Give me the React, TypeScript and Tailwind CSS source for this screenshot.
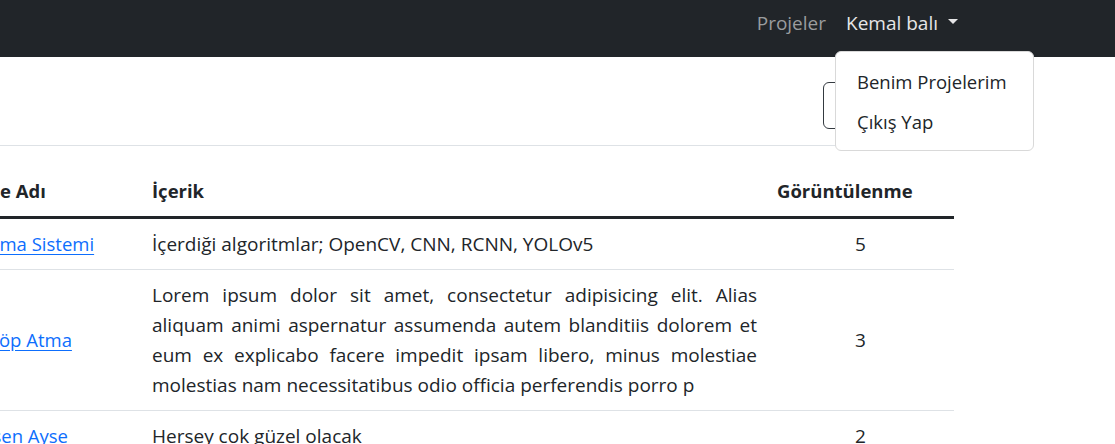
import React from "react";

const lines = [
  "Lorem ipsum dolor sit amet, consectetur adipisicing elit. Alias",
  "aliquam animi aspernatur assumenda autem blanditiis dolorem et",
  "eum ex explicabo facere impedit ipsam libero, minus molestiae",
];
const lastLine = "molestias nam necessitatibus odio officia perferendis porro p";

export default function App() {
  return (
    <div className="relative w-[1115px] h-[444px] overflow-hidden bg-white text-[#212529] font-['Open_Sans',sans-serif] text-[18.5px] leading-[30px]">
      {/* Navbar */}
      <nav className="h-[57px] bg-[#212529] flex justify-end pr-[147px] pt-[8px] text-[19px]">
        <a className="px-[10px] text-[#9a9c9e] h-[30px]">Projeler</a>
        <a className="px-[10px] text-[#e6e6e7] h-[30px] flex items-center">
          Kemal balı
          <span className="ml-[10px] mt-[-3px] inline-block w-0 h-0 border-l-[5px] border-r-[5px] border-t-[5px] border-l-transparent border-r-transparent border-t-[#e6e6e7]" />
        </a>
      </nav>

      {/* Content */}
      <div className="ml-[-47px] w-[1001px]">
        <div className="flex justify-end pt-[25px] pb-[16px] border-b border-[#dee2e6]">
          <button className="h-[47px] w-[131px] border border-[#343a40] rounded-[6px] px-[15px] text-[#212529]">
            Proje Ekle
          </button>
        </div>

        <table className="mt-[20px] w-[1001px] table-fixed border-collapse">
          <colgroup>
            <col className="w-[189px]" />
            <col className="w-[625px]" />
            <col className="w-[187px]" />
          </colgroup>
          <thead>
            <tr className="border-b-[3px] border-[#212529]">
              <th className="text-left font-bold px-[10px] py-[10px] whitespace-nowrap">Proje Adı</th>
              <th className="text-left font-bold px-[10px] py-[10px]">İçerik</th>
              <th className="text-left font-bold px-[10px] py-[10px]">Görüntülenme</th>
            </tr>
          </thead>
          <tbody className="text-[19px]">
            <tr className="border-b border-[#dee2e6]">
              <td className="px-[10px] py-[10px] align-middle whitespace-nowrap text-[18.5px]">
                <a className="text-[#0d6efd] underline underline-offset-[3px]">Tanıma Sistemi</a>
              </td>
              <td className="px-[10px] py-[10px] align-middle">İçerdiği algoritmlar; OpenCV, CNN, RCNN, YOLOv5</td>
              <td className="px-[10px] py-[10px] align-middle text-center">5</td>
            </tr>
            <tr className="border-b border-[#dee2e6]">
              <td className="px-[10px] py-[10px] align-middle whitespace-nowrap text-[18.5px]">
                <a className="text-[#0d6efd] underline underline-offset-[3px]">Ev Çöp Atma</a>
              </td>
              <td className="px-[10px] py-[10px] align-middle">
                {lines.map((l) => (
                  <span key={l} className="block text-justify [text-align-last:justify]">
                    {l}
                  </span>
                ))}
                <span className="block">{lastLine}</span>
              </td>
              <td className="px-[10px] py-[10px] align-middle text-center">3</td>
            </tr>
            <tr>
              <td className="px-[10px] py-[10px] align-middle whitespace-nowrap text-[18.5px]">
                <a className="text-[#0d6efd] underline underline-offset-[3px]">Gülsen Ayse</a>
              </td>
              <td className="px-[10px] py-[10px] align-middle">Hersey cok güzel olacak</td>
              <td className="px-[10px] py-[10px] align-middle text-center">2</td>
            </tr>
          </tbody>
        </table>
      </div>

      {/* Dropdown menu */}
      <div className="absolute left-[835px] top-[51px] w-[199px] h-[100px] bg-white border border-[#d9d9d9] rounded-[6px] pt-[10px] pb-[8px]">
        <div className="px-[21px] h-[40px] flex items-center whitespace-nowrap">Benim Projelerim</div>
        <div className="px-[21px] h-[40px] flex items-center whitespace-nowrap">Çıkış Yap</div>
      </div>
    </div>
  );
}
